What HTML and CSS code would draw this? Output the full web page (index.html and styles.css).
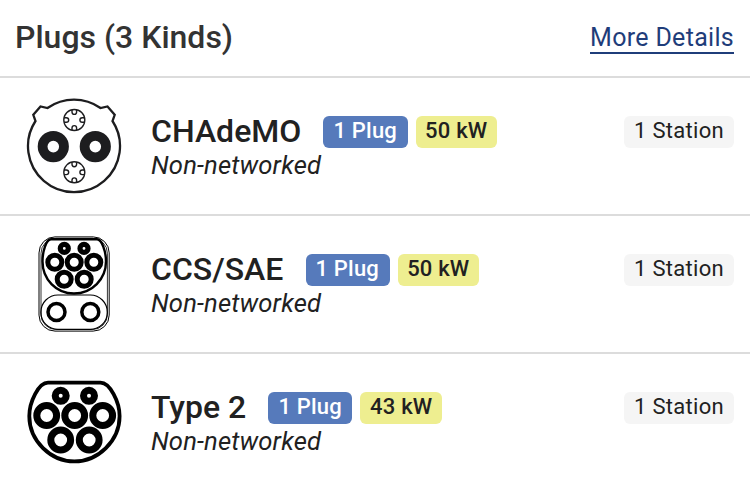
FILE: index.html
```html
<!DOCTYPE html>
<html lang="en">
<head>
    <meta charset="UTF-8">
    <meta name="viewport" content="width=device-width, initial-scale=1.0">
    <title>Plugs</title>
    <link rel="stylesheet" href="styles.css">
</head>
<body>
    <div class="header">
        <h1>Plugs (3 Kinds)</h1>
        <a href="#" class="more-link">More Details</a>
    </div>

    <div class="plug">
        <svg class="plug-icon" viewBox="0 0 96 96" fill="none" stroke="#1d1d1f">
            <path stroke-width="2.3" d="M21.5 10A46.2 46.2 0 0 1 74.5 10L81.5 8.5L88.7 16.8L86.5 23A46 46 0 1 1 9.5 23L7.3 16.8L14.5 8.5Z"/>
            <circle cx="27.3" cy="48.6" r="10.7" stroke-width="9.8"/>
            <circle cx="69.3" cy="48.6" r="10.7" stroke-width="9.8"/>
            <g id="signal-pin" stroke-width="1.4">
                <circle cx="48.3" cy="22" r="10.5"/>
                <path d="M46 12V14A2.3 2.4 0 0 0 50.6 14V12M46 32V30A2.3 2.4 0 0 1 50.6 30V32M38.3 19.7H40.3A2.4 2.3 0 0 1 40.3 24.3H38.3M58.3 19.7H56.3A2.4 2.3 0 0 0 56.3 24.3H58.3"/>
            </g>
            <use href="#signal-pin" y="52.3"/>
        </svg>
        <div class="plug-info">
            <div class="plug-title">
                <h2>CHAdeMO</h2>
                <span class="badge count">1 Plug</span>
                <span class="badge power">50 kW</span>
            </div>
            <div class="network">Non-networked</div>
        </div>
        <span class="badge stations">1 Station</span>
    </div>

    <div class="plug">
        <svg class="plug-icon" viewBox="0 0 96 96" fill="none" stroke="#000">
            <rect x="13" y="0.9" width="70.2" height="94.2" rx="16" stroke-width="1"/>
            <rect x="15" y="2.3" width="66.4" height="91.2" rx="15" stroke-width="0.8"/>
            <path stroke-width="2.4" d="M25 3.3H71C76 3.3 80 16 80 25.5C80 43 66 57.5 48 57.5S16.5 43 16.5 25.5C16.5 16 20 3.3 25 3.3Z"/>
            <rect x="14.9" y="59" width="66.4" height="34.4" rx="17" stroke-width="1.2"/>
            <g stroke-width="5.2">
                <circle cx="38.3" cy="12.4" r="4"/>
                <circle cx="58" cy="12.4" r="4"/>
            </g>
            <g stroke-width="5">
                <circle cx="28.8" cy="26.2" r="7"/>
                <circle cx="48.2" cy="26.2" r="7"/>
                <circle cx="67.8" cy="26.2" r="7"/>
                <circle cx="38.2" cy="43.2" r="7"/>
                <circle cx="58.2" cy="43.2" r="7"/>
            </g>
            <circle cx="30.5" cy="76" r="8.5" stroke-width="3.5"/>
            <circle cx="64.3" cy="76" r="8.5" stroke-width="3.5"/>
        </svg>
        <div class="plug-info">
            <div class="plug-title">
                <h2>CCS/SAE</h2>
                <span class="badge count">1 Plug</span>
                <span class="badge power">50 kW</span>
            </div>
            <div class="network">Non-networked</div>
        </div>
        <span class="badge stations">1 Station</span>
    </div>

    <div class="plug">
        <svg class="plug-icon" viewBox="0 0 96 96" fill="none" stroke="#000">
            <path stroke-width="3.8" d="M22 8.6H74.5C84 8.6 93.6 28 93.6 42C93.6 67 72 87.4 48.4 87.4S3.3 67 3.3 42C3.3 28 12.5 8.6 22 8.6Z"/>
            <g stroke-width="7">
                <circle cx="34.7" cy="21.8" r="5.5"/>
                <circle cx="63" cy="21.8" r="5.5"/>
            </g>
            <g stroke-width="7">
                <circle cx="20.7" cy="41.5" r="9.9"/>
                <circle cx="48.7" cy="41.5" r="9.9"/>
                <circle cx="76.7" cy="41.5" r="9.9"/>
                <circle cx="34.7" cy="66" r="9.9"/>
                <circle cx="63.2" cy="66" r="9.9"/>
            </g>
        </svg>
        <div class="plug-info">
            <div class="plug-title">
                <h2>Type 2</h2>
                <span class="badge count">1 Plug</span>
                <span class="badge power">43 kW</span>
            </div>
            <div class="network">Non-networked</div>
        </div>
        <span class="badge stations">1 Station</span>
    </div>
</body>
</html>
```
FILE: styles.css
```css
* {
    box-sizing: border-box;
}
body {
    margin: 0;
    background-color: #fff;
    color: #212121;
    font-family: Roboto, sans-serif;
    overflow: hidden;
}
h1, h2 {
    margin: 0;
    font-weight: 500;
    font-size: 32px;
}
.header {
    display: flex;
    justify-content: space-between;
    align-items: flex-start;
    height: 76px;
    padding: 18px 16px 0 15px;
}
h1 {
    color: #333;
    line-height: 38px;
}
.more-link {
    margin-top: 6px;
    color: #1f3d7a;
    font-size: 25px;
    line-height: 28px;
    letter-spacing: 0.3px;
    text-decoration: none;
    border-bottom: 2px solid #1f3d7a;
}
.plug {
    display: flex;
    align-items: flex-start;
    height: 138px;
    padding: 20px 16px 0 26px;
    border-top: 2px solid #dcdcdc;
}
.plug-icon {
    width: 96px;
    height: 96px;
    flex: none;
}
.plug-info {
    flex: 1;
    padding: 14px 0 0 29px;
}
.plug-title {
    display: flex;
    align-items: flex-start;
    gap: 8px;
}
h2 {
    margin-right: 14.2px;
    line-height: 38px;
}
.badge {
    height: 32px;
    margin-top: 4px;
    padding: 0 10px;
    border-radius: 6px;
    font-size: 22px;
    font-weight: 500;
    line-height: 30px;
    letter-spacing: 0.2px;
}
.count {
    padding-right: 10.5px;
    background-color: #567abb;
    color: #fff;
}
.power {
    padding: 0 9.6px;
    background-color: #eeee90;
}
.stations {
    margin-top: 18px;
    background-color: #f5f5f5;
    font-weight: 400;
    letter-spacing: 0.3px;
}
.network {
    font-size: 25.6px;
    font-style: italic;
    line-height: 30px;
    letter-spacing: 0.15px;
}
```
